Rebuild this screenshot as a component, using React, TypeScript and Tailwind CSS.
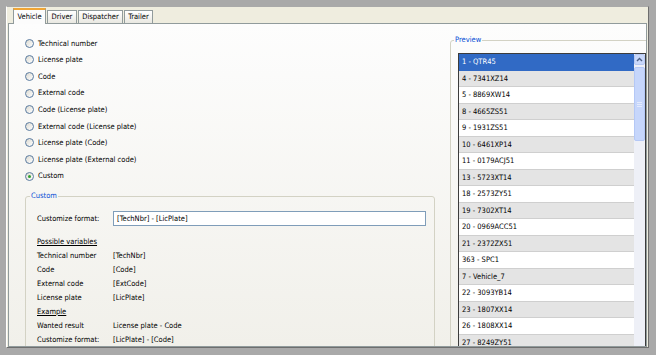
import React from 'react';

const radios = [
  'Technical number',
  'License plate',
  'Code',
  'External code',
  'Code (License plate)',
  'External code (License plate)',
  'License plate (Code)',
  'License plate (External code)',
  'Custom',
];

const variables = [
  ['Technical number', '[TechNbr]'],
  ['Code', '[Code]'],
  ['External code', '[ExtCode]'],
  ['License plate', '[LicPlate]'],
];

const preview = [
  '1 - QTR45',
  '4 - 7341XZ14',
  '5 - 8869XW14',
  '8 - 4665ZS51',
  '9 - 1931ZS51',
  '10 - 6461XP14',
  '11 - 0179ACJ51',
  '13 - 5723XT14',
  '18 - 2573ZY51',
  '19 - 7302XT14',
  '20 - 0969ACC51',
  '21 - 2372ZX51',
  '363 - SPC1',
  '7 - Vehicle_7',
  '22 - 3093YB14',
  '23 - 1807XX14',
  '26 - 1808XX14',
  '27 - 8249ZY51',
  '28 - 7232ZWE51',
];

const tabs = [
  { label: 'Vehicle', w: 'w-[33px]' },
  { label: 'Driver', w: 'w-[30px]' },
  { label: 'Dispatcher', w: 'w-[45px]' },
  { label: 'Trailer', w: 'w-[29px]' },
];

const Radio = ({ checked }: { checked?: boolean }) => (
  <span className="flex h-[9px] w-[9px] shrink-0 items-center justify-center rounded-full border border-[#5a7ba0] bg-linear-to-br from-[#dcdad1] to-white">
    {checked && <span className="h-[3px] w-[3px] rounded-full bg-[#2fa12f]" />}
  </span>
);

const ScrollBar = () => (
  <div className="flex w-[11px] shrink-0 flex-col bg-[#eef0f7]">
    {/* up button */}
    <div className="flex h-[11px] shrink-0 items-center justify-center rounded-[2px] border border-[#b7c9f2] bg-[#c9d8fb]">
      <svg width="7" height="5" viewBox="0 0 7 5">
        <path d="M1 4 L3.5 1.5 L6 4" fill="none" stroke="#4d6185" strokeWidth="1.4" />
      </svg>
    </div>
    {/* thumb */}
    <div className="mt-[2px] flex h-[74px] shrink-0 flex-col items-center justify-center gap-[1px] rounded-[2px] border border-[#b4c8f6] bg-[#c6d6fb]">
      <span className="h-[1px] w-[5px] bg-[#e4ebfd]" />
      <span className="h-[1px] w-[5px] bg-[#e4ebfd]" />
      <span className="h-[1px] w-[5px] bg-[#e4ebfd]" />
    </div>
  </div>
);

export default function App() {
  return (
    <div className="h-[355px] w-[656px] overflow-hidden bg-[#a9a9a9] pb-[7px] pl-[6px] pr-[7px] pt-[6px] font-['DejaVu_Sans_Condensed','DejaVu_Sans',sans-serif] text-[7.5px] font-stretch-condensed text-black">
      <div className="flex h-full flex-col overflow-hidden border-b border-l border-r border-t border-b-[#6e6e6e] border-l-white border-r-[#6e6e6e] border-t-[#a9a9a9] bg-[#efeddf]">
        {/* tab strip */}
        <div className="flex h-[16px] shrink-0 items-end pl-[6px]">
          {tabs.map((t, i) =>
            i === 0 ? (
              <div
                key={t.label}
                className={`relative z-10 -mb-[1px] flex h-[16px] ${t.w} items-center justify-center border-x border-t-2 border-x-[#919b9c] border-t-[#f0a535] bg-[#fcfcfc]`}
              >
                {t.label}
              </div>
            ) : (
              <div
                key={t.label}
                className={`ml-[1px] flex h-[13px] ${t.w} items-center justify-center border-x border-t border-[#919b9c] bg-linear-to-b from-white to-[#e9e8e1]`}
              >
                {t.label}
              </div>
            ),
          )}
        </div>

        {/* tab page */}
        <div className="ml-[1px] mr-[1px] flex min-h-0 flex-1 overflow-hidden border border-[#919b9c] bg-linear-to-b from-[#fdfdfd] to-[#f1f0ea]">
          {/* left column */}
          <div className="flex w-[426px] shrink-0 flex-col pl-[16px] pt-[11px]">
            {radios.map((r, i) => (
              <div key={r} className="flex h-[16.6px] shrink-0 items-center gap-[4px]">
                <Radio checked={i === radios.length - 1} />
                <span>{r}</span>
              </div>
            ))}

            <fieldset className="mt-[6px] w-[410px] shrink-0 rounded-[3px] border border-[#d3d2c4] pb-[10px] pl-[11px] pt-[9px]">
              <legend className="-ml-[7px] px-[1px] text-[#0a4fd6] leading-[12px]">Custom</legend>
              <div className="flex h-[15px] items-center">
                <span className="w-[76px]">Customize format:</span>
                <div className="flex h-[15px] w-[313px] items-center border border-[#7f9db9] bg-white px-[3px]">
                  [TechNbr] - [LicPlate]
                </div>
              </div>
              <div className="mt-[8px] flex h-[14px] items-center underline">Possible variables</div>
              {variables.map(([k, v]) => (
                <div key={k} className="flex h-[14px] items-center">
                  <span className="w-[76px]">{k}</span>
                  <span>{v}</span>
                </div>
              ))}
              <div className="flex h-[14px] items-center underline">Example</div>
              <div className="flex h-[14px] items-center">
                <span className="w-[76px]">Wanted result</span>
                <span>License plate - Code</span>
              </div>
              <div className="flex h-[14px] items-center">
                <span className="w-[76px]">Customize format:</span>
                <span>[LicPlate] - [Code]</span>
              </div>
            </fieldset>
          </div>

          {/* right column */}
          <div className="ml-[15px] min-w-0 flex-1 pt-[10px]">
            <fieldset className="w-[205px] rounded-[3px] border border-[#d3d2c4] pl-[7px] pt-[7px]">
              <legend className="-ml-[4px] px-[1px] text-[#0a4fd6] leading-[12px]">Preview</legend>
              <div className="flex h-[320px] w-[188px] border border-[#3c3c3c] bg-white">
                <div className="flex min-w-0 flex-1 flex-col">
                  {preview.map((p, i) => (
                    <div
                      key={p}
                      className={`flex h-[16.5px] shrink-0 items-center border-b px-[3px] ${
                        i === 0
                          ? 'border-[#316ac5] bg-[#316ac5] text-white'
                          : i % 2 === 1
                            ? 'border-[#cfcfcf] bg-[#e4e4e4]'
                            : 'border-[#cfcfcf] bg-white'
                      }`}
                    >
                      {p}
                    </div>
                  ))}
                </div>
                <ScrollBar />
              </div>
            </fieldset>
          </div>
        </div>
      </div>
    </div>
  );
}
